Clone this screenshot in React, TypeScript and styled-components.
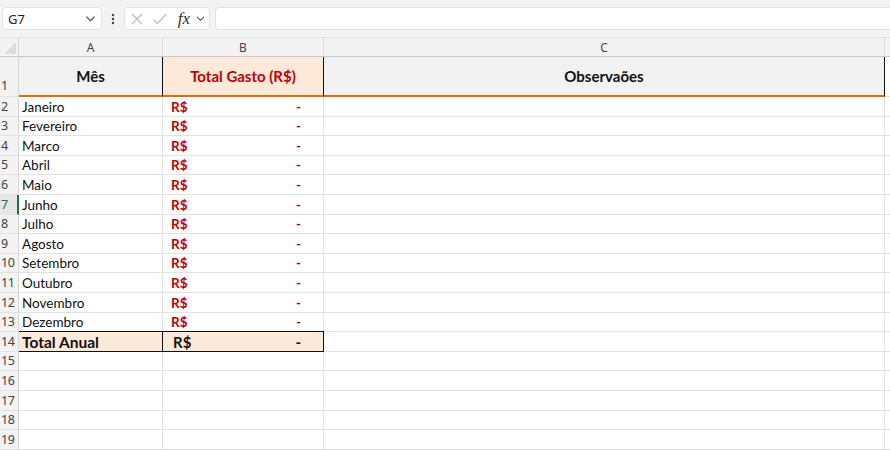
import styled, { createGlobalStyle, css } from "styled-components";
import { FC } from "react";

const GlobalStyle = createGlobalStyle`
  html, body {
    margin: 0;
    padding: 0;
    background: #ffffff;
    overflow: hidden;
  }
  * {
    box-sizing: border-box;
  }
`;

const months = [
  "Janeiro",
  "Fevereiro",
  "Marco",
  "Abril",
  "Maio",
  "Junho",
  "Julho",
  "Agosto",
  "Setembro",
  "Outubro",
  "Novembro",
  "Dezembro",
];

const ROW_H = 19.6;

const Root = styled.div`
  width: 890px;
  height: 451px;
  overflow: hidden;
  font-family: "Noto Sans", "Open Sans", sans-serif;
`;

const Toolbar = styled.div`
  height: 38px;
  background: #f3f3f3;
  display: flex;
  align-items: center;
  padding: 0 0 0 2px;
  border-bottom: 1px solid #e4e4e4;
`;

const NameBox = styled.div`
  width: 100px;
  height: 23px;
  background: #ffffff;
  border: 1px solid #e3e3e3;
  border-radius: 4px;
  display: flex;
  align-items: center;
  justify-content: space-between;
  padding: 0 4px 0 5px;
  font-size: 13px;
  color: #222;
`;

const Dots = styled.div`
  width: 22px;
  display: flex;
  justify-content: center;
`;

const FxBox = styled.div`
  width: 86px;
  height: 23px;
  background: #ffffff;
  border: 1px solid #e3e3e3;
  border-radius: 4px;
  display: flex;
  align-items: center;
  padding: 0 3px 0 5px;
  gap: 8px;
`;

const Fx = styled.span`
  font-family: "Liberation Serif", "DejaVu Serif", serif;
  font-style: italic;
  font-size: 17px;
  color: #333;
  margin-left: 2px;
  margin-right: -3px;
  line-height: 1;
`;

const FormulaBar = styled.div`
  flex: 1;
  height: 23px;
  margin-left: 5px;
  background: #ffffff;
  border: 1px solid #e3e3e3;
  border-radius: 4px 0 0 4px;
  border-right: none;
`;

const Sheet = styled.div`
  display: grid;
  grid-template-columns: 19px 144px 161px 561px 1fr;
  grid-template-rows: 19px 40px repeat(18, ${ROW_H}px);
`;

const Corner = styled.div`
  background: #f3f3f3;
  border-right: 1px solid #d6d6d6;
  border-bottom: 1px solid #c9c9c9;
  position: relative;
  &::after {
    content: "";
    position: absolute;
    right: 2px;
    bottom: 2px;
    width: 0;
    height: 0;
    border-left: 12px solid transparent;
    border-bottom: 12px solid #dcdcdc;
  }
`;

const ColHead = styled.div`
  background: #f3f3f3;
  border-right: 1px solid #dadada;
  border-bottom: 1px solid #c9c9c9;
  display: flex;
  align-items: center;
  justify-content: center;
  font-size: 12px;
  color: #444;
`;

const RowHead = styled.div<{ $selected?: boolean; $tall?: boolean }>`
  background: #f3f3f3;
  border-bottom: 1px solid #e2e2e2;
  border-right: 1px solid #d6d6d6;
  display: flex;
  align-items: flex-end;
  padding-left: 1px;
  padding-bottom: ${(p) => (p.$tall ? "1px" : "0")};
  font-size: 12.5px;
  line-height: 18px;
  color: #444;
  letter-spacing: -0.3px;
  ${(p) =>
    p.$selected &&
    css`
      border-right: 2px solid #1e7145;
      color: #1e7145;
      background: #e6e6e6;
    `}
`;

type CellKind = "plain" | "head" | "headOrange" | "total";

const Cell = styled.div<{ $kind?: CellKind; $blackRight?: boolean }>`
  border-right: 1px solid #e2e2e2;
  border-bottom: 1px solid #e2e2e2;
  display: flex;
  align-items: flex-end;
  padding: 0 3px;
  font-family: "Lato", "Open Sans", sans-serif;
  font-size: 13.5px;
  line-height: 18px;
  color: #111;
  white-space: nowrap;
  ${(p) =>
    (p.$kind === "head" || p.$kind === "headOrange") &&
    css`
      background: ${p.$kind === "headOrange" ? "#fde9d9" : "#f2f2f2"};
      border-bottom: 2px solid #e26b0a;
      justify-content: center;
      align-items: center;
      font-weight: 700;
      font-size: 15px;
      color: ${p.$kind === "headOrange" ? "#c00000" : "#111"};
    `}
  ${(p) =>
    p.$kind === "total" &&
    css`
      background: #fde9d9;
      border-top: 1px solid #111;
      border-bottom: 1px solid #111;
      margin-top: -1px;
      font-weight: 700;
      font-size: 15.5px;
    `}
  ${(p) =>
    p.$blackRight &&
    css`
      border-right: 1px solid #111;
    `}
`;

const Money = styled.div<{ $total?: boolean }>`
  width: 100%;
  display: flex;
  justify-content: space-between;
  padding: 0 19px 0 ${(p) => (p.$total ? "7px" : "5px")};
  font-weight: 700;
  color: ${(p) => (p.$total ? "#111" : "#c00000")};
  font-size: ${(p) => (p.$total ? "15px" : "13.5px")};
`;

const Chevron: FC<{ size?: number }> = ({ size = 12 }) => (
  <svg width={size} height={size} viewBox="0 0 12 12" fill="none">
    <path d="M2.5 4.5 L6 8 L9.5 4.5" stroke="#555" strokeWidth="1.2" strokeLinecap="round" strokeLinejoin="round" />
  </svg>
);

const Row: FC<{ n: number; month: string }> = ({ n, month }) => (
  <>
    <RowHead $selected={n === 7}>{n}</RowHead>
    <Cell>{month}</Cell>
    <Cell>
      <Money>
        <span>R$</span>
        <span>-</span>
      </Money>
    </Cell>
    <Cell />
    <Cell />
  </>
);

const EmptyRow: FC<{ n: number }> = ({ n }) => (
  <>
    <RowHead>{n}</RowHead>
    <Cell />
    <Cell />
    <Cell />
    <Cell />
  </>
);

const App: FC = () => {
  const emptyRows = [15, 16, 17, 18, 19];
  return (
    <Root>
      <GlobalStyle />
      <Toolbar>
        <NameBox>
          <span>G7</span>
          <Chevron size={13} />
        </NameBox>
        <Dots>
          <svg width="4" height="12" viewBox="0 0 4 12">
            <circle cx="2" cy="2" r="1.2" fill="#444" />
            <circle cx="2" cy="6" r="1.2" fill="#444" />
            <circle cx="2" cy="10" r="1.2" fill="#444" />
          </svg>
        </Dots>
        <FxBox>
          <svg width="14" height="14" viewBox="0 0 14 14">
            <path d="M2 2 L12 12 M12 2 L2 12" stroke="#bdbdbd" strokeWidth="1.2" />
          </svg>
          <svg width="16" height="14" viewBox="0 0 16 14">
            <path d="M1.5 7.5 L5.5 11.5 L14.5 2" stroke="#bdbdbd" strokeWidth="1.2" fill="none" />
          </svg>
          <Fx>fx</Fx>
          <Chevron size={11} />
        </FxBox>
        <FormulaBar />
      </Toolbar>
      <Sheet>
        <Corner />
        <ColHead>A</ColHead>
        <ColHead>B</ColHead>
        <ColHead>C</ColHead>
        <ColHead />

        <RowHead $tall>1</RowHead>
        <Cell $kind="head" $blackRight>Mês</Cell>
        <Cell $kind="headOrange" $blackRight>Total Gasto (R$)</Cell>
        <Cell $kind="head" $blackRight>Observaões</Cell>
        <Cell />

        {months.map((m, i) => (
          <Row key={m} n={i + 2} month={m} />
        ))}

        <RowHead>14</RowHead>
        <Cell $kind="total" $blackRight>Total Anual</Cell>
        <Cell $kind="total" $blackRight>
          <Money $total>
            <span>R$</span>
            <span>-</span>
          </Money>
        </Cell>
        <Cell />
        <Cell />

        {emptyRows.map((n) => (
          <EmptyRow key={n} n={n} />
        ))}
      </Sheet>
    </Root>
  );
};

export default App;
